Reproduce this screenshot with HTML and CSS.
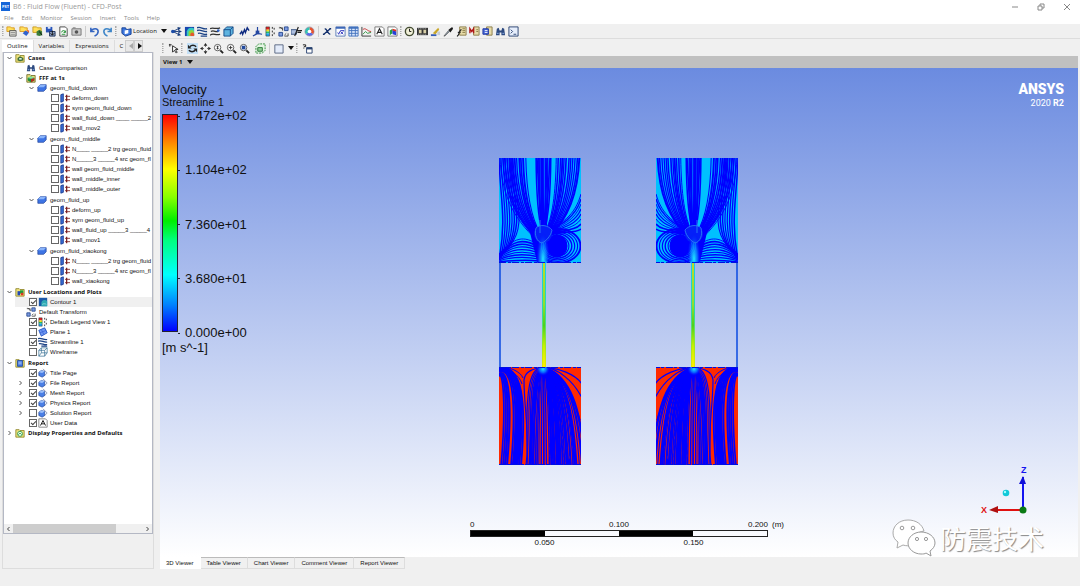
FILE: index.html
```html
<!DOCTYPE html>
<html lang="en">
<head>
    <meta charset="UTF-8">
    <meta name="viewport" content="width=device-width, initial-scale=1.0">
    <title>B6 : Fluid Flow (Fluent) - CFD-Post</title>
    <link rel="stylesheet" href="styles.css">
</head>
<body>

    <!-- Icon sprite -->
    <svg class="sprite" aria-hidden="true">
        <symbol id="i-open1" viewBox="0 0 12 12"><path d="M1 1h4l1 1h3v4H1z" fill="#ffdf5a" stroke="#d99a20"/><path d="M4 5h7v6H4z" fill="#e8e8e0" stroke="#555"/><path d="M5 7h5M5 9h5" stroke="#888"/></symbol>
        <symbol id="i-open2" viewBox="0 0 12 12"><path d="M1 1h4l1 1h3v4H1z" fill="#ffdf5a" stroke="#d99a20"/><path d="M4 8l3-3 4 2-3 4z" fill="#2f62d0"/><path d="M8 4l3 1v3z" fill="#f0602a"/></symbol>
        <symbol id="i-open3" viewBox="0 0 12 12"><path d="M1 1h4l1 1h4v5H1z" fill="#ffdf5a" stroke="#c99a20"/><path d="M5 6l3-2 3 2v4l-3 1-3-1z" fill="#3b7d3a"/><path d="M8 6l3 4" stroke="#111"/></symbol>
        <symbol id="i-save" viewBox="0 0 12 12"><path d="M1 1h7v6H1z" fill="#2955b8"/><path d="M3 1h3v2H3z" fill="#dfe7fa"/><path d="M5 6h6v5H5z" fill="#8fa3c6" stroke="#1d2f57"/><path d="M8 5v5M6 8l2 2 2-2" stroke="#111" fill="none"/></symbol>
        <symbol id="i-refresh" viewBox="0 0 12 12"><path d="M2 1h6l2 2v8H2z" fill="#fff" stroke="#444"/><path d="M4 7a2 2 0 1 1 4 0M8 5v2H6M4 9h4" stroke="#178a2a" fill="none"/></symbol>
        <symbol id="i-camera" viewBox="0 0 12 12"><path d="M1 3h10v7H1z" fill="#ccc" stroke="#777"/><circle cx="6" cy="6.5" r="2" fill="#555"/><path d="M2 2h3" stroke="#777"/></symbol>
        <symbol id="i-undo" viewBox="0 0 12 12"><path d="M2 2v4h4M2 6c2-4 8-4 8 0 0 2-2 4-4 5" fill="none" stroke="#3465c0" stroke-width="1.7"/></symbol>
        <symbol id="i-redo" viewBox="0 0 12 12"><path d="M10 2v4H6M10 6C8 2 2 2 2 6c0 2 2 4 4 5" fill="none" stroke="#3f86c8" stroke-width="1.7"/></symbol>
        <symbol id="i-plane" viewBox="0 0 12 12"><path d="M1 4l7-3 3 6-7 4z" fill="#6f97f2" stroke="#1d4fc0"/><path d="M2 7l8-3M4 3l3 6" stroke="#3c68d8"/></symbol>
        <symbol id="i-location" viewBox="0 0 12 12"><path d="M1 2h4l1 2 5-1v6l-6 2-4-3z" fill="#3d78e0" stroke="#123c90"/><path d="M4 5l4-1v4l-4 1z" fill="#fff"/></symbol>
        <symbol id="i-vector" viewBox="0 0 12 12"><path d="M2 6h6M2 6l6-3M2 6l6 3" stroke="#163a7a"/><path d="M7 1l4 1-3 3zM8 4l4 2-4 2zM8 7l3 3-4 1z" fill="#163a7a"/><circle cx="2" cy="6" r="2" fill="#1b4ca8"/></symbol>
        <symbol id="i-contour" viewBox="0 0 12 12"><path d="M1 1h10v10H1z" fill="#1746b0"/><path d="M3 11V6a5 5 0 0 1 8-3v8z" fill="#35c9c2"/><path d="M5 11V8a3 3 0 0 1 6-1v4z" fill="#8fd63c"/><path d="M7 11V9a2 2 0 0 1 4 0v2z" fill="#e6562e"/></symbol>
        <symbol id="i-contour2" viewBox="0 0 12 12"><path d="M1 1h10v10H1z" fill="#1a57a8"/><path d="M4 11V7a4 4 0 0 1 7-2v6z" fill="#2fa7b4"/><path d="M5 9a3 2 0 0 1 5 0" stroke="#8fe0dc" fill="none"/></symbol>
        <symbol id="i-stream" viewBox="0 0 12 12"><path d="M0 2c4-2 6 2 11 1M0 5c4-2 7 2 11 1M1 8c4-1 6 2 10 1M4 11h7" stroke="#1b4286" stroke-width="1.5" fill="none"/></symbol>
        <symbol id="i-particle" viewBox="0 0 12 12"><path d="M0 3c3-2 6 1 11-1M1 6c3-2 5 1 8 0M0 10c4-3 6 1 11-1" stroke="#333" stroke-width="1.4" fill="none"/><circle cx="9" cy="5" r="1.5" fill="#2c5fc4"/></symbol>
        <symbol id="i-volume" viewBox="0 0 12 12"><path d="M1 4l3-3h7v7l-3 3H1z" fill="#5fb4e0" stroke="#134a88"/><path d="M1 4h7v7M8 4l3-3" stroke="#134a88" fill="none"/></symbol>
        <symbol id="i-textmark" viewBox="0 0 12 12"><path d="M1 9l2-3 1 3 2-5 1 3 2-5 2 3" stroke="#0d2a80" stroke-width="1.5" fill="none"/></symbol>
        <symbol id="i-axis" viewBox="0 0 12 12"><path d="M6 1v7l-5 3M6 8l5 1" stroke="#2447a0" stroke-width="1.3" fill="none"/><path d="M4 5h4v4H4z" fill="#2447a0"/></symbol>
        <symbol id="i-legend" viewBox="0 0 12 12"><path d="M1 1h4v3H1z" fill="#e02020"/><path d="M1 4h4v2H1z" fill="#f2e020"/><path d="M1 6h4v2H1z" fill="#22c46a"/><path d="M1 8h4v3H1z" fill="#1ea6f0"/><path d="M1 1h4v10H1z" fill="none" stroke="#333" stroke-width=".6"/><path d="M8 1v2M8 5v2M8 9v2M10 2v2M10 7v2" stroke="#222"/></symbol>
        <symbol id="i-transform" viewBox="0 0 12 12"><path d="M7 1h4v4H7zM1 7h4v4H1z" fill="#7d9be0" stroke="#24478f"/><path d="M1 2h4v3M2 1l3 3M11 8v3H7M9 8l-2 2" stroke="#444" fill="none"/></symbol>
        <symbol id="i-clip" viewBox="0 0 12 12"><path d="M0 4h6v5H0z" fill="#aebfdf" stroke="#35507f"/><path d="M4 11L8 1M7 5h5M7 7h4" stroke="#222" stroke-width="1.3"/></symbol>
        <symbol id="i-color" viewBox="0 0 12 12"><path d="M6 6V1a5 5 0 0 1 4 8z" fill="#e9552f"/><path d="M6 6l4 3a5 5 0 0 1-8 0z" fill="#5a6be8"/><path d="M6 6L2 9a5 5 0 0 1 4-8z" fill="#31c4b3"/><circle cx="6" cy="6" r="2" fill="#fff"/><circle cx="6" cy="6" r="5" fill="none" stroke="#8a7a9c" stroke-width=".6"/></symbol>
        <symbol id="i-var" viewBox="0 0 12 12"><path d="M2 9l7-6M3 3c3 0 3 6 6 6M8 3h2M1 9h2" stroke="#14306c" stroke-width="1.5" fill="none"/></symbol>
        <symbol id="i-expr" viewBox="0 0 12 12"><path d="M1 1h10v10H1z" fill="#fff" stroke="#5577b4"/><path d="M1 2h10" stroke="#3c67b8" stroke-width="2"/><path d="M3 7l1 2 2-4h4M6 9l3-3M6 6l3 3" stroke="#3038c0" fill="none"/></symbol>
        <symbol id="i-table" viewBox="0 0 12 12"><path d="M1 1h10v10H1z" fill="#dbe7fb" stroke="#4272bd"/><path d="M1 2h10" stroke="#4272bd" stroke-width="2"/><path d="M1 5h10M1 8h10M4 1v10M8 1v10" stroke="#4272bd"/></symbol>
        <symbol id="i-chart" viewBox="0 0 12 12"><path d="M1 1v10h10" stroke="#333" fill="none"/><path d="M2 4c3-3 5 2 9 2" stroke="#c22b2b" fill="none"/><path d="M2 9l3-3 2 2 4-1" stroke="#2d9440" fill="none"/></symbol>
        <symbol id="i-text" viewBox="0 0 12 12"><path d="M1 1h8l2 2v8H1z" fill="#fff" stroke="#777"/><path d="M3 9l3-6 3 6M4 7h4" stroke="#222" fill="none" stroke-width="1.2"/></symbol>
        <symbol id="i-figure" viewBox="0 0 12 12"><path d="M1 1h8l2 2v8H1z" fill="#fff" stroke="#777"/><path d="M3 5l3-2v5l-3 2z" fill="#24a046"/><path d="M6 4l4 2v4l-4-1z" fill="#2540d8"/><path d="M6 3l4 1v2L6 5z" fill="#e03020"/></symbol>
        <symbol id="i-clock" viewBox="0 0 12 12"><circle cx="6" cy="6" r="4.5" fill="#f1f0d8" stroke="#444c32" stroke-width="1.5"/><path d="M6 3v3h2" stroke="#111" fill="none"/></symbol>
        <symbol id="i-film" viewBox="0 0 12 12"><path d="M0 2h12v8H0z" fill="#333"/><path d="M2 4h3v4H2zM7 4h3v4H7z" fill="#d8d0a8"/><path d="M1 3h10M1 9h10" stroke="#bbb" stroke-dasharray="1 1"/></symbol>
        <symbol id="i-quick" viewBox="0 0 12 12"><path d="M1 9h6v2H1z" fill="#355db8"/><path d="M3 8l6-6 1 2-4 5z" fill="#c8a628"/><path d="M8 6h3v4H8z" fill="#c3ccd8"/></symbol>
        <symbol id="i-probe" viewBox="0 0 12 12"><path d="M1 11l5-6 1 1-5 5z" fill="#9ab" stroke="#444" stroke-width=".7"/><path d="M6 4l4-3 1 2-3 4z" fill="#1a1a1a"/></symbol>
        <symbol id="i-fx" viewBox="0 0 12 12"><path d="M4 1h7v9H4z" fill="#e7dba8" stroke="#8a7c48"/><path d="M7 3h3M7 5h3M7 7h3" stroke="#8a7c48"/><path d="M1 11c3 0 2-7 5-7M2 7h3" stroke="#222" fill="none" stroke-width="1.3"/></symbol>
        <symbol id="i-macro" viewBox="0 0 12 12"><path d="M5 1h6v9H5z" fill="#e7dba8" stroke="#8a7c48"/><path d="M8 4h2M8 6h2" stroke="#8a7c48"/><path d="M1 8V3l2 3 2-3v5" stroke="#b01818" fill="none" stroke-width="1.5"/></symbol>
        <symbol id="i-mesh" viewBox="0 0 12 12"><path d="M5 1h6v9H5z" fill="#e7dba8" stroke="#8a7c48"/><path d="M1 3h6v6H1z" fill="#4767d6" stroke="#1e35a0"/><path d="M3 5h3M3 7h3" stroke="#fff"/></symbol>
        <symbol id="i-binoc" viewBox="0 0 12 12"><path d="M2 3l2-1 1 3h2l1-3 2 1 1 7H7V7H5v3H1z" fill="#2d4a80"/><path d="M2 8h2M8 8h2" stroke="#8db0e8"/></symbol>
        <symbol id="i-cmd" viewBox="0 0 12 12"><path d="M1 1h10v10H1z" fill="#e6eefc" stroke="#26406e"/><path d="M3 4l2 2-2 2M6 9h3" stroke="#26406e" fill="none"/></symbol>
        <symbol id="i-select" viewBox="0 0 12 12"><path d="M5 3v7l2-2 2 3 1-1-2-3h3z" fill="#fff" stroke="#222"/><path d="M1 2h3M2 1v3" stroke="#222"/></symbol>
        <symbol id="i-rotate" viewBox="0 0 12 12"><path d="M3 4c2-2 5-2 7 0M9 8c-2 2-5 2-7 0" stroke="#222" fill="none" stroke-width="1.6"/><path d="M1 2v4h4zM11 10V6H7z" fill="#222"/></symbol>
        <symbol id="i-pan" viewBox="0 0 12 12"><path d="M6 0l2 3H4zM6 12l2-3H4zM0 6l3-2v4zM12 6L9 4v4z" fill="#222"/><path d="M6 3v1M6 8v1M3 6h1M8 6h1" stroke="#222"/></symbol>
        <symbol id="i-zoom" viewBox="0 0 12 12"><circle cx="5" cy="5" r="3.5" fill="#fff" stroke="#555"/><path d="M8 8l3 3" stroke="#222" stroke-width="2"/><path d="M5 3v4M4 4h2M4 6h2" stroke="#333"/></symbol>
        <symbol id="i-zoomin" viewBox="0 0 12 12"><circle cx="5" cy="5" r="3.5" fill="#fff" stroke="#555"/><path d="M8 8l3 3" stroke="#222" stroke-width="2"/><path d="M5 3v4M3 5h4" stroke="#333"/></symbol>
        <symbol id="i-fit" viewBox="0 0 12 12"><circle cx="5" cy="5" r="3.5" fill="#fff" stroke="#555"/><path d="M8 8l3 3" stroke="#222" stroke-width="2"/><path d="M3 3h4v4H3z" fill="#22499c"/></symbol>
        <symbol id="i-hilite" viewBox="0 0 12 12"><path d="M1 4l3-3h7v7l-3 3H1z" fill="#e5f5e4" stroke="#2a8a34" stroke-dasharray="2 1"/><path d="M3 5h5v4H3z" fill="#8fcb94" stroke="#2a7a34"/></symbol>
        <symbol id="i-box" viewBox="0 0 12 12"><path d="M2 2h9v9H2z" fill="#e3ebfa" stroke="#566480"/></symbol>
        <symbol id="i-help" viewBox="0 0 12 12"><path d="M1 2h3v2H2M2 5v1" stroke="#111" fill="none"/><path d="M5 5h6v6H5z" fill="#fff" stroke="#26406e"/><path d="M5 6h6" stroke="#26406e" stroke-width="2"/></symbol>
        <symbol id="i-cases" viewBox="0 0 12 12"><path d="M1 2h4l1 1h5v8H1z" fill="#eee27c" stroke="#8d8426"/><path d="M3 6l3-2 4 2v3l-4 1-3-1z" fill="#3f6e3a"/><path d="M5 6h3v2H5z" fill="#d6f0e0"/></symbol>
        <symbol id="i-case" viewBox="0 0 12 12"><path d="M1 2h4l1 1h5v8H1z" fill="#e7dd7a" stroke="#6d6a26"/><path d="M2 6l4-2 4 2v3l-4 2-4-2z" fill="#1f8d3c"/><path d="M6 7l4-1v3l-4 2z" fill="#b8281c"/><path d="M6 4l4 2-4 1-4-1z" fill="#8de0a4"/></symbol>
        <symbol id="i-plots" viewBox="0 0 12 12"><path d="M1 2h4l1 1h5v8H1z" fill="#eee27c" stroke="#8d8426"/><path d="M3 5h3v5H3z" fill="#2349b4"/><path d="M6 4h4v4H6z" fill="#1f9c3c"/><path d="M7 7h3v3H7z" fill="#e03222"/></symbol>
        <symbol id="i-reportf" viewBox="0 0 12 12"><path d="M1 2h4l1 1h5v8H1z" fill="#eee27c" stroke="#8d8426"/><path d="M3 3h6v7H3z" fill="#3f74e0" stroke="#234a9c"/><path d="M4 5h4M4 7h4" stroke="#b9d0fa"/></symbol>
        <symbol id="i-display" viewBox="0 0 12 12"><path d="M1 2h4l1 1h5v8H1z" fill="#eee27c" stroke="#8d8426"/><circle cx="6" cy="7" r="3" fill="#e7f7e8" stroke="#2c9a46"/><path d="M4 8l2-2 2 2" stroke="#2c9a46" fill="none"/></symbol>
        <symbol id="i-domain" viewBox="0 0 12 12"><path d="M1 5l3-3h7v5l-3 3H1z" fill="#3d74e4" stroke="#1c3f96" stroke-width=".8"/><path d="M4 2h7L8 5H1z" fill="#8ab4fa"/></symbol>
        <symbol id="i-bound" viewBox="0 0 12 12"><path d="M1 2l3-1v9l-3 1z" fill="#3a6fd8" stroke="#15358c"/><path d="M6 4h6M6 8h6" stroke="#7a1c1c"/><path d="M8 2v4M8 6v4" stroke="#7a1c1c" stroke-width="1.5"/></symbol>
        <symbol id="i-wire" viewBox="0 0 12 12"><path d="M1 4l3-3h7v6l-3 4H1zM1 4h7v7M8 4l3-3M4 1v6h7M4 7l-3 4" fill="none" stroke="#28658c" stroke-width=".8"/></symbol>
        <symbol id="i-page" viewBox="0 0 12 12"><path d="M6 1l5 5-4 4" fill="#fff" stroke="#7d8cae"/><path d="M1 5l3-2 4 1v5l-3 2-4-2z" fill="#4a7fe6" stroke="#24489c" stroke-width=".8"/><path d="M1 5l3-2 4 1-3 2z" fill="#9cc0fa"/></symbol>
    </svg>

    <header class="titlebar">
        <span class="app-badge">PST</span>
        <h1>B6 : Fluid Flow (Fluent) - CFD-Post</h1>
        <div class="window-buttons">
            <button aria-label="Minimize"><svg viewBox="0 0 8 8"><path d="M1 4h6"/></svg></button>
            <button aria-label="Restore"><svg viewBox="0 0 8 8"><path d="M1 3h4v4H1zM3 3V1h4v4H5"/></svg></button>
            <button aria-label="Close"><svg viewBox="0 0 8 8"><path d="M1 1l6 6M7 1L1 7"/></svg></button>
        </div>
    </header>

    <nav class="menubar">
        <a href="#">File</a><a href="#">Edit</a><a href="#">Monitor</a><a href="#">Session</a><a href="#">Insert</a><a href="#">Tools</a><a href="#">Help</a>
    </nav>

    <div class="toolbar" id="mainToolbar">
        <span class="grip"></span>
        <button aria-label="Load results"><svg><use href="#i-open1"/></svg></button>
        <button aria-label="Load state"><svg><use href="#i-open2"/></svg></button>
        <button aria-label="Open case"><svg><use href="#i-open3"/></svg></button>
        <button aria-label="Save"><svg><use href="#i-save"/></svg></button>
        <button aria-label="Refresh"><svg><use href="#i-refresh"/></svg></button>
        <button aria-label="Save picture"><svg><use href="#i-camera"/></svg></button>
        <span class="rule"></span>
        <button aria-label="Undo"><svg><use href="#i-undo"/></svg></button>
        <button aria-label="Redo"><svg><use href="#i-redo"/></svg></button>
        <span class="grip"></span>
        <button class="wide"><svg><use href="#i-location"/></svg>Location<i class="arrow"></i></button>
        <button aria-label="Vector"><svg><use href="#i-vector"/></svg></button>
        <button aria-label="Contour"><svg><use href="#i-contour"/></svg></button>
        <button aria-label="Streamline"><svg><use href="#i-stream"/></svg></button>
        <button aria-label="Particle track"><svg><use href="#i-particle"/></svg></button>
        <button aria-label="Volume rendering"><svg><use href="#i-volume"/></svg></button>
        <span class="space"></span>
        <button aria-label="Text"><svg><use href="#i-textmark"/></svg></button>
        <button aria-label="Coordinate frame"><svg><use href="#i-axis"/></svg></button>
        <button aria-label="Legend"><svg><use href="#i-legend"/></svg></button>
        <button aria-label="Instance transform"><svg><use href="#i-transform"/></svg></button>
        <button aria-label="Clip plane"><svg><use href="#i-clip"/></svg></button>
        <button aria-label="Color map"><svg><use href="#i-color"/></svg></button>
        <span class="rule"></span>
        <button aria-label="Variable"><svg><use href="#i-var"/></svg></button>
        <button aria-label="Expression"><svg><use href="#i-expr"/></svg></button>
        <button aria-label="Table"><svg><use href="#i-table"/></svg></button>
        <button aria-label="Chart"><svg><use href="#i-chart"/></svg></button>
        <button aria-label="Comment"><svg><use href="#i-text"/></svg></button>
        <button aria-label="Figure"><svg><use href="#i-figure"/></svg></button>
        <span class="grip"></span>
        <button aria-label="Timestep selector"><svg><use href="#i-clock"/></svg></button>
        <button aria-label="Animation"><svg><use href="#i-film"/></svg></button>
        <button aria-label="Quick editor"><svg><use href="#i-quick"/></svg></button>
        <button aria-label="Probe"><svg><use href="#i-probe"/></svg></button>
        <button aria-label="Function calculator"><svg><use href="#i-fx"/></svg></button>
        <button aria-label="Macro calculator"><svg><use href="#i-macro"/></svg></button>
        <button aria-label="Mesh calculator"><svg><use href="#i-mesh"/></svg></button>
        <button aria-label="Case comparison"><svg><use href="#i-binoc"/></svg></button>
        <button aria-label="Command editor"><svg><use href="#i-cmd"/></svg></button>
    </div>

    <main class="workspace">
        <!-- Outline panel -->
        <section class="sidebar">
            <div class="side-tabs">
                <button class="active">Outline</button>
                <button>Variables</button>
                <button>Expressions</button>
                <button class="cut">C</button>
                <button class="scroll off" aria-label="Scroll tabs left"><i></i></button>
                <button class="scroll" aria-label="Scroll tabs right"><i></i></button>
            </div>
            <div class="side-body">
                <div class="tree-box">
                    <ul class="tree" id="outlineTree"></ul>
                    <div class="hscroll">
                        <button aria-label="Scroll left"><svg viewBox="0 0 6 6"><path d="M4 1L2 3l2 2"/></svg></button>
                        <span class="track"><span class="thumb"></span></span>
                        <button aria-label="Scroll right"><svg viewBox="0 0 6 6"><path d="M2 1l2 2-2 2"/></svg></button>
                    </div>
                </div>
            </div>
        </section>

        <!-- 3D viewer -->
        <section class="viewer">
            <div class="toolbar view-tools">
                <span class="grip"></span>
                <button aria-label="Select"><svg><use href="#i-select"/></svg></button>
                <span class="grip"></span>
                <button class="pressed" aria-label="Rotate"><svg><use href="#i-rotate"/></svg></button>
                <button aria-label="Pan"><svg><use href="#i-pan"/></svg></button>
                <button aria-label="Zoom"><svg><use href="#i-zoom"/></svg></button>
                <button aria-label="Zoom box"><svg><use href="#i-zoomin"/></svg></button>
                <button aria-label="Fit view"><svg><use href="#i-fit"/></svg></button>
                <span class="space"></span>
                <button aria-label="Highlighting"><svg><use href="#i-hilite"/></svg></button>
                <span class="rule"></span>
                <button class="wide" aria-label="Viewport layout"><svg><use href="#i-box"/></svg><i class="arrow"></i></button>
                <span class="grip"></span>
                <button aria-label="Help"><svg><use href="#i-help"/></svg></button>
            </div>
            <button class="view-head">View 1<i class="arrow"></i></button>
            <div class="viewport">
                <div class="legend">
                    <h2>Velocity</h2>
                    <h3>Streamline 1</h3>
                    <div class="scale">
                        <div class="colorbar"></div>
                        <ol>
                            <li>1.472e+02</li>
                            <li>1.104e+02</li>
                            <li>7.360e+01</li>
                            <li>3.680e+01</li>
                            <li>0.000e+00</li>
                        </ol>
                    </div>
                    <p>[m s^-1]</p>
                </div>

                <svg class="flow" viewBox="0 0 240 309" role="img" aria-label="Velocity streamlines">
                    <defs>
                        <linearGradient id="pipe" x1="0" y1="0" x2="0" y2="1">
                            <stop offset="0" stop-color="#b8dc2a"/>
                            <stop offset=".4" stop-color="#8ee02c"/>
                            <stop offset=".6" stop-color="#4fd01a"/>
                            <stop offset=".8" stop-color="#c8f000"/>
                            <stop offset="1" stop-color="#fff000"/>
                        </linearGradient>
                        <linearGradient id="pipeEdge" x1="0" y1="0" x2="0" y2="1">
                            <stop offset="0" stop-color="#15cdf0"/>
                            <stop offset=".5" stop-color="#30d8a0"/>
                            <stop offset=".8" stop-color="#a0e820"/>
                            <stop offset="1" stop-color="#e8e800"/>
                        </linearGradient>
                        <radialGradient id="jet">
                            <stop offset="0" stop-color="#20e8ff"/>
                            <stop offset=".5" stop-color="#0a80ff" stop-opacity=".8"/>
                            <stop offset="1" stop-color="#0000ff" stop-opacity="0"/>
                        </radialGradient>
                        <clipPath id="topClip"><path d="M0 0h82v105H0z"/></clipPath>
                        <clipPath id="bottomClip"><path d="M0 209h82v98H0z"/></clipPath>
                        <g id="half">
                            <g clip-path="url(#topClip)">
                                <path d="M0 0h82v105H0z" fill="#00c0ff"/>
                                <g id="topLines" fill="none" stroke="#0000ff"></g>
                                <circle cx="44" cy="76" r="9" fill="#0420f8"/>
                                <ellipse cx="44" cy="101" rx="7" ry="27" fill="url(#jet)"/>
                                <path d="M37 70c4-4 12-3 16 2-1 6-6 11-10 13-5-1-8-8-6-15M41 62v13" fill="none" stroke="#2f88f4" stroke-width=".8"/>
                            </g>
                            <g clip-path="url(#bottomClip)">
                                <path d="M0 209h82v98H0z" fill="#ff2a00"/>
                                <g id="bottomLines" fill="none" stroke="#0000ff"></g>
                                <ellipse cx="44" cy="211" rx="7" ry="7" fill="url(#jet)"/>
                            </g>
                            <path d="M0 104.500h82M0 209.500h82M0 306.500h82" stroke="#0010e0" stroke-dasharray="7 2 3 1"/>
                            <path d="M1 105v104" stroke="#0a4ae0" stroke-width="1.500"/>
                            <path d="M43 105h4v104h-4z" fill="url(#pipeEdge)"/>
                            <path d="M44 105h2v104h-2z" fill="url(#pipe)"/>
                        </g>
                    </defs>
                    <use href="#half"/>
                    <use href="#half" transform="matrix(-1 0 0 1 239 0)"/>
                </svg>

                <div class="brand"><strong>ANSYS</strong><span>2020 <b>R2</b></span></div>

                <div class="ruler">
                    <div class="marks"><span>0</span><span>0.100</span><span>0.200</span><em>(m)</em></div>
                    <div class="bar"><i></i><i></i><i></i><i></i></div>
                    <div class="marks lower"><span>0.050</span><span>0.150</span></div>
                </div>

                <svg class="triad" viewBox="0 0 50 52">
                    <path d="M43 12v34" stroke="#1414f0" stroke-width="2"/>
                    <path d="M43 11l-4 8h7z" fill="#1010d8"/>
                    <path d="M43 45H16" stroke="#e01010" stroke-width="2"/>
                    <path d="M9 45l9-4v7z" fill="#b01010"/>
                    <circle cx="43" cy="45" r="3.500" fill="#0a7a14"/>
                    <circle cx="26" cy="28" r="3.300" fill="#10c8d8"/>
                    <circle cx="25" cy="27" r="1.200" fill="#a0ffff"/>
                    <text x="41" y="8" fill="#1414f0">Z</text>
                    <text x="1" y="48" fill="#e01010">X</text>
                </svg>

                <div class="watermark">
                    <svg viewBox="0 0 44 38">
                        <path d="M16 1C7 1 1 7 1 14c0 4 2 7 5 9l-1 6 6-3c3 1 6 1 9 0 0-8 5-13 12-14C30 5 24 1 16 1z" fill="#fff" stroke="#aaa"/>
                        <path d="M29 13c-7 0-13 5-13 11s6 11 13 11c2 0 4 0 5-1l5 3-1-5c3-2 5-5 5-8 0-6-6-11-14-11z" fill="#fff" stroke="#999"/>
                        <g fill="#fff" stroke="#999"><circle cx="10" cy="9" r="1.800"/><circle cx="21" cy="9" r="1.800"/><circle cx="25" cy="20" r="1.600"/><circle cx="34" cy="20" r="1.600"/></g>
                    </svg>
                    <span>防震技术</span>
                </div>
            </div>
            <div class="view-tabs">
                <button class="active">3D Viewer</button>
                <button>Table Viewer</button>
                <button>Chart Viewer</button>
                <button>Comment Viewer</button>
                <button>Report Viewer</button>
            </div>
        </section>
    </main>

    <script src="script.js"></script>
</body>
</html>
```
FILE: styles.css
```css
* {
    box-sizing: border-box;
}

body {
    margin: 0;
    height: 100vh;
    display: flex;
    flex-direction: column;
    overflow: hidden;
    background-color: #f0f0f0;
    color: #111;
    font-family: "Open Sans", "Noto Sans", sans-serif;
    font-size: 6px;
    line-height: 10px;
}

button {
    margin: 0;
    padding: 0;
    border: none;
    background: none;
    color: inherit;
    font: inherit;
}

h1, h2, h3, p, ol, ul {
    margin: 0;
    padding: 0;
    font-weight: normal;
    list-style: none;
}

.sprite {
    position: absolute;
    width: 0;
    height: 0;
}

/* Title and menu */
.titlebar {
    display: flex;
    align-items: center;
    height: 13px;
    padding-left: 1px;
    background-color: #fff;
    color: #999;
}

.titlebar h1 {
    flex: 1;
    font-size: 7px;
}

.app-badge {
    width: 9px;
    height: 9px;
    margin-right: 3px;
    background-color: #1565d8;
    color: #fff;
    font-size: 4px;
    font-weight: bold;
    line-height: 9px;
    text-align: center;
}

.window-buttons {
    display: flex;
    gap: 18px;
    padding-right: 9px;
}

.window-buttons svg {
    display: block;
    width: 8px;
    height: 8px;
    fill: none;
    stroke: #888;
}

.menubar {
    display: flex;
    gap: 8px;
    height: 11px;
    padding-left: 4px;
    line-height: 11px;
    background-color: #fff;
}

.menubar a {
    color: #888;
    text-decoration: none;
}

/* Toolbars */
.toolbar {
    display: flex;
    align-items: center;
    gap: 2px;
    height: 15px;
    padding-left: 2px;
    background-color: #f0f0f0;
}

.toolbar svg {
    display: block;
    width: 11px;
    height: 11px;
}

.grip {
    width: 2px;
    height: 10px;
    border-left: 1px dotted #aaa;
    border-right: 1px dotted #ccc;
}

.rule {
    width: 1px;
    height: 11px;
    margin: 0 1px;
    background-color: #ccc;
}

.space {
    width: 1px;
}

.wide {
    display: flex;
    align-items: center;
    gap: 1px;
    margin: 0 2px;
}

.arrow {
    margin-left: 3px;
    border: 3px solid transparent;
    border-top: 4px solid #111;
    border-bottom: 0;
}

.pressed {
    background-color: #c3e0f7;
}

#mainToolbar {
    flex: none;
    margin-bottom: 1px;
    border-bottom: 1px solid #ddd;
}

/* Layout */
.workspace {
    flex: 1;
    display: flex;
    gap: 5px;
    padding: 0 2px 17px;
    min-height: 0;
}

.sidebar {
    flex: none;
    display: flex;
    flex-direction: column;
    width: 152px;
}

.side-tabs {
    display: flex;
    height: 12px;
    line-height: 12px;
}

.side-tabs button {
    padding: 0 5px;
    border-right: 1px solid #ddd;
}

.side-tabs .active, .view-tabs .active {
    background-color: #fff;
}

.side-tabs .cut {
    flex: 1;
    padding: 0 5px;
    border: none;
    overflow: hidden;
    text-align: left;
}

.side-tabs .scroll {
    width: 9px;
    padding: 0 3px;
    border: 1px solid #ccc;
    background-color: #e8e8e8;
}

.side-tabs .scroll:last-child {
    margin-right: 12px;
}

.scroll i {
    display: block;
    border: 3px solid transparent;
    border-left: 4px solid #111;
    border-right: 0;
}

.scroll.off i {
    border-left: 0;
    border-right: 4px solid #aaa;
}

.side-body {
    flex: 1;
    display: flex;
    padding-bottom: 34px;
    border: 1px solid #ddd;
    border-top: 0;
    min-height: 0;
}

.tree-box {
    flex: 1;
    display: flex;
    flex-direction: column;
    border: 1px solid #b4b8c4;
    background-color: #fff;
    min-width: 0;
}

/* Outline tree */
.tree {
    flex: 1;
    overflow: hidden;
    font-family: "Liberation Sans", Arial, sans-serif;
}

.tree ul {
    padding-left: 11px;
}

.row {
    display: flex;
    align-items: center;
    height: 10px;
    white-space: nowrap;
}

.group {
    margin-top: 1px;
}

.caret {
    flex: none;
    width: 11px;
    height: 6px;
    fill: none;
    stroke: #555;
}

.row .icon {
    flex: none;
    width: 10px;
    height: 10px;
    margin-right: 3px;
}

.row label {
    display: flex;
    align-items: center;
}

.row label .icon {
    margin-right: 2px;
}

.row input {
    flex: none;
    appearance: none;
    width: 8px;
    height: 8px;
    margin: 0 1px 0 3px;
    border: 1px solid #666;
    background-color: #fff;
}

.row input:checked::after {
    content: "";
    display: block;
    width: 4px;
    height: 2px;
    margin: 1px;
    border-left: 1px solid #444;
    border-bottom: 1px solid #444;
    transform: rotate(-45deg);
}

.bold {
    font-family: "Open Sans", "Noto Sans", sans-serif;
    font-weight: bold;
}

.selected {
    background-color: #f0f0f0;
}

.hscroll {
    display: flex;
    align-items: center;
    height: 9px;
    background-color: #f0f0f0;
}

.hscroll svg {
    display: block;
    width: 9px;
    height: 6px;
    fill: none;
    stroke: #444;
}

.track {
    flex: 1;
}

.thumb {
    display: block;
    width: 79%;
    height: 9px;
    background-color: #cdcdcd;
}

/* Viewer */
.viewer {
    flex: 1;
    display: flex;
    flex-direction: column;
    min-width: 0;
    padding-left: 1px;
}

.view-tools {
    flex: none;
    height: 16px;
}

.view-tools .grip {
    margin-right: 2px;
}

.view-tools .wide {
    margin: 0;
}

.view-head {
    display: flex;
    align-items: center;
    gap: 2px;
    height: 12px;
    padding-left: 3px;
    background-color: #c0c0c0;
    font-weight: bold;
}

.viewport {
    position: relative;
    flex: 1;
    display: flex;
    align-items: center;
    justify-content: center;
    background-image: linear-gradient(#6b8be0, #fff);
    font-family: "Liberation Sans", Arial, sans-serif;
}

.flow {
    width: 240px;
    height: 309px;
}

.legend {
    position: absolute;
    left: 2px;
    top: 15px;
    font-size: 13px;
    line-height: 14px;
}

.legend h2 {
    font-size: 13px;
}

.legend h3 {
    font-size: 11px;
    line-height: 10px;
}

.scale {
    display: flex;
    height: 218px;
    margin: 7px 0 9px;
}

.colorbar {
    width: 16px;
    border: 1px solid #223;
    background-image: linear-gradient(#f00, #ff8000 12%, #ff0 25%, #8f0 38%, #0e0 49%, #00ff80 58%, #0ff 74%, #0080ff 88%, #00f);
}

.scale ol {
    display: flex;
    flex-direction: column;
    justify-content: space-between;
    margin: -5px 0 -8px;
}

.scale li {
    display: flex;
    align-items: center;
    gap: 5px;
}

.scale li::before {
    content: "";
    width: 2px;
    height: 1px;
    background-color: #223;
}

.brand {
    position: absolute;
    top: 13px;
    right: 14px;
    display: flex;
    flex-direction: column;
    align-items: flex-end;
    color: #fff;
    font-family: Roboto, sans-serif;
    font-size: 9px;
    line-height: 11px;
}

.brand strong {
    font-size: 14px;
    font-weight: 900;
    line-height: 17px;
}

.ruler {
    position: absolute;
    bottom: 10px;
    left: 50%;
    width: 298px;
    margin-left: -149px;
    font-size: 8px;
    line-height: 9px;
}

.marks {
    display: flex;
}

.marks span {
    flex: 1;
    text-align: center;
}

.marks span:first-child {
    text-align: left;
}

.marks span:nth-child(3) {
    text-align: right;
}

.marks em {
    width: 0;
    text-indent: 4px;
    font-style: normal;
}

.ruler .lower span {
    text-align: center;
}

.bar {
    display: flex;
    height: 7px;
    margin: 1px 0;
    border: 1px solid #222;
}

.bar i {
    flex: 1;
}

.bar i:nth-child(odd) {
    background-color: #000;
}

.triad {
    position: absolute;
    right: 48px;
    bottom: 40px;
    width: 50px;
    height: 52px;
    font-size: 9px;
    font-weight: bold;
}

.watermark {
    position: absolute;
    right: 34px;
    bottom: 0;
    display: flex;
    align-items: center;
    gap: 4px;
    color: #fff;
    font-family: "Noto Sans CJK SC", sans-serif;
    font-size: 26px;
    line-height: 38px;
    text-shadow: 1px 1px 1px #888;
}

.watermark svg {
    width: 44px;
    height: 38px;
}

.view-tabs {
    display: flex;
    height: 12px;
    font-family: "Liberation Sans", Arial, sans-serif;
    line-height: 11px;
}

.view-tabs button {
    padding: 0 6px;
    border-top: 1px solid #bbb;
    border-right: 1px solid #ddd;
    border-bottom: 1px solid #ddd;
}

.view-tabs .active {
    border-color: #fff;
}
```
FILE: script.js
```js
// Outline tree: c = checkbox state, k = open / closed caret
const outline = [
    { t: "Cases", i: "cases", k: "open", b: 1, kids: [
        { t: "Case Comparison", i: "binoc" },
        { t: "FFF at 1s", i: "case", k: "open", b: 1, kids: [
            { t: "geom_fluid_down", i: "domain", k: "open", kids: bounds(["deform_down", "sym geom_fluid_down", "wall_fluid_down ____ _____2", "wall_mov2"]) },
            { t: "geom_fluid_middle", i: "domain", k: "open", g: 1, kids: bounds(["N____ _____2 trg geom_fluid", "N_____3 _____4 src geom_fl", "wall geom_fluid_middle", "wall_middle_inner", "wall_middle_outer"]) },
            { t: "geom_fluid_up", i: "domain", k: "open", g: 1, kids: bounds(["deform_up", "sym geom_fluid_up", "wall_fluid_up _____3 _____4", "wall_mov1"]) },
            { t: "geom_fluid_xiaokong", i: "domain", k: "open", g: 1, kids: bounds(["N____ _____2 trg geom_fluid", "N_____3 _____4 src geom_fl", "wall_xiaokong"]) }
        ] }
    ] },
    { t: "User Locations and Plots", i: "plots", k: "open", b: 1, g: 1, kids: [
        { t: "Contour 1", i: "contour2", c: true, sel: 1 },
        { t: "Default Transform", i: "transform" },
        { t: "Default Legend View 1", i: "legend", c: true },
        { t: "Plane 1", i: "plane", c: false },
        { t: "Streamline 1", i: "stream", c: true },
        { t: "Wireframe", i: "wire", c: false }
    ] },
    { t: "Report", i: "reportf", k: "open", b: 1, g: 1, kids: [
        { t: "Title Page", i: "page", c: true },
        { t: "File Report", i: "page", c: true, k: "closed" },
        { t: "Mesh Report", i: "page", c: true, k: "closed" },
        { t: "Physics Report", i: "page", c: true, k: "closed" },
        { t: "Solution Report", i: "page", c: false, k: "closed" },
        { t: "User Data", i: "text", c: true }
    ] },
    { t: "Display Properties and Defaults", i: "display", k: "closed", b: 1 }
];

function bounds(names) {
    return names.map(name => ({ t: name, i: "bound", c: false }));
}

function caret(kind) {
    const d = kind === "open" ? "M1 2l2 2 2-2" : kind === "closed" ? "M2 1l2 2-2 2" : "";
    return `<svg class="caret" viewBox="0 0 6 6"><path d="${d}"/></svg>`;
}

function renderNodes(nodes) {
    return nodes.map(n => {
        const icon = `<svg class="icon"><use href="#i-${n.i}"/></svg>`;
        const body = n.c === undefined
            ? `${icon}<span>${n.t}</span>`
            : `<label><input type="checkbox"${n.c ? " checked" : ""}>${icon}${n.t}</label>`;
        const cls = "row" + (n.b ? " bold" : "") + (n.g ? " group" : "") + (n.sel ? " selected" : "");
        const kids = n.kids ? `<ul>${renderNodes(n.kids)}</ul>` : "";
        return `<li><div class="${cls}">${caret(n.k)}${body}</div>${kids}</li>`;
    }).join("");
}

document.getElementById("outlineTree").innerHTML = renderNodes(outline);

// Streamlines
let seed = 7;
function rnd(a, b) {
    seed = (seed * 16807) % 2147483647;
    return a + (b - a) * seed / 2147483647;
}

function line(d, w) {
    return `<path d="${d}" stroke-width="${w.toFixed(2)}"/>`;
}

function topLines() {
    let out = "";
    // falling from the top edge into the vortex
    for (let x = 1; x <= 82; x += rnd(1.6, 3)) {
        if ((x > 29 && x < 35) || (x > 52 && x < 57)) continue;
        const off = x - 44;
        const endX = 44 + off * 0.15;
        const endY = 71 + Math.abs(off) * 0.25;
        out += line(`M${x} 0C${x - off * 0.04} 36 ${44 + off * 0.7} 60 ${endX} ${endY}`, rnd(0.9, 2));
    }
    // wedge between the two bright gaps
    out += line("M43 0v70", 3) + line("M38 0l4 70M48 0l-2 70M51 0l-4 70", 1.6);
    // down the left wall
    for (let k = 0; k < 8; k++) {
        out += line(`M${k * 2} 0C${1 + k * 2} 40 ${8 + k * 3} ${60 + k} ${k * 1.5} ${102 - k * 2}`, rnd(0.8, 1.6));
    }
    // from the lower left corner to the jet
    for (let k = 0; k < 9; k++) {
        out += line(`M0 ${104 - k}C${8 + k} ${103 - k * 3} 24 ${101 - k * 3} 40 ${103 - k * 2}`, rnd(0.8, 1.8));
    }
    out += line("M33 68L42 105", 7);
    // recirculation on the right
    out += `<ellipse cx="58" cy="88" rx="10" ry="11" fill="#0000ff"/>`;
    for (let k = 0; k < 6; k++) {
        out += `<ellipse cx="${57 + k * 0.5}" cy="88" rx="${10 + k * 2.4}" ry="${9 + k * 1.6}" stroke-width="${rnd(1, 1.9).toFixed(2)}"/>`;
    }
    for (let k = 0; k < 8; k++) {
        out += line(`M82 ${36 + k * 5}C76 ${58 + k * 2.5} 62 ${66 + k} 46 ${74 + k * 0.6}`, rnd(0.8, 1.6));
    }
    out += line("M50 68c6 2 8 4 10 8", 6);
    return out;
}

function bottomLines() {
    let out = "";
    // spreading from the nozzle
    for (let x = 27; x <= 100; x += rnd(2, 4)) {
        const off = x - 44;
        out += line(`M44 209C${44 + off * 0.5} ${212 + Math.abs(off) * 0.1} ${44 + off * 0.68} 250 ${44 + off * 0.76} 308`, rnd(1.1, 2.4));
    }
    // outer arcs to the right wall
    out += line("M44 209C60 210 76 216 83 226M44 209C58 210 74 222 83 240M44 210C56 212 70 226 81 262", 1.2);
    for (let k = 0; k < 5; k++) {
        out += line(`M44 ${209 + k}C${32 + k} ${211 + k * 2} ${25 + k * 2} ${222 + k} ${29 + k * 2} 308`, rnd(1, 1.6));
    }
    out += line("M44 209C34 211 26 213 25 222C25 250 31 276 27 308", 1.2);
    // left branch
    for (let x = 3; x <= 23; x += 2) {
        if (x === 11) continue;
        out += line(`M0 ${220 - x / 2}C${x} ${212 - x / 6} ${x + 5} 240 ${x - 1} 308`, rnd(1.4, 2.4));
    }
    out += line("M0 209C10 208 22 214 24 220M0 211C10 211 20 216 23 226", 1);
    out += line("M18 226C22 250 20 280 16 308", 6);
    // broken specks
    for (let k = 0; k < 8; k++) {
        out += `<path d="M44 209C${48 + k * 2} 216 ${54 + k * 3} 254 ${50 + k * 3.4} 308" stroke-width="1" stroke-dasharray="${4 + k % 4} 3"/>`;
    }
    return out;
}

document.getElementById("topLines").innerHTML = topLines();
document.getElementById("bottomLines").innerHTML = bottomLines();
```
